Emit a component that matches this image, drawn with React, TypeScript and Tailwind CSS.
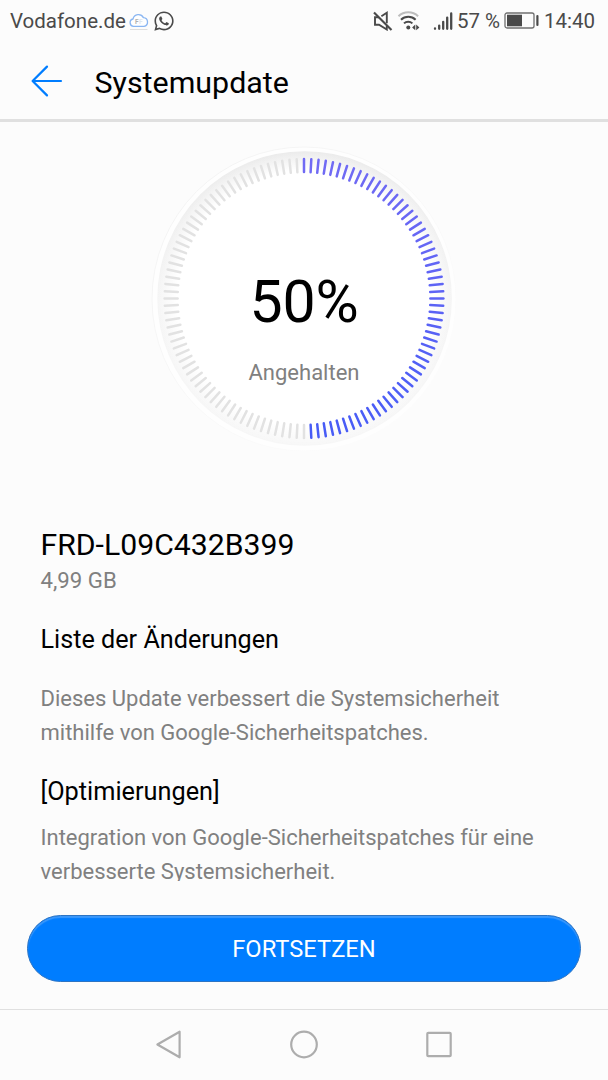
import { FaWhatsapp } from "react-icons/fa";

const TICKS = 120;
const PROGRESS = 50;

function lerp(a: number, b: number, t: number) {
  return Math.round(a + (b - a) * t);
}

function StatusBar() {
  return (
    <div className="flex h-[42px] shrink-0 items-center pl-[10px] pr-[13px] text-[20.5px] leading-6 text-[#4a4a4a]">
      <span>Vodafone.de</span>
      <svg className="ml-[3px]" width="20" height="20" viewBox="0 0 20 20" fill="none">
        <path d="M1 18.5h17.5" stroke="#dedede" strokeWidth="1" />
        <path
          d="M4.6 15.3a3.7 3.7 0 0 1-.6-7.3 5.6 5.6 0 0 1 10.4-1.4 4.4 4.4 0 0 1 .6 8.7z"
          fill="#fff"
          stroke="#8ab6f2"
          strokeWidth="1.3"
        />
        <text x="6" y="12.9" fontSize="6.5" fontWeight="700" fill="#b0b0b0">F</text>
        <text x="10" y="12.9" fontSize="6.5" fontWeight="700" fill="#dfe6ef">F</text>
      </svg>
      <FaWhatsapp className="ml-[4px] size-[22px] text-[#4a4a4a]" />

      <div className="ml-auto flex items-center">
        <svg width="20" height="20" viewBox="0 0 20 20" fill="none" stroke="#4a4a4a" strokeWidth="1.9">
          <path d="M1 1.6 18.5 19" strokeWidth="2.1" />
          <path d="M6 6.2H2v7.6h4l7.8 4.7V15M8.4 5.2l5.4-3.4v10.4" />
        </svg>
        <svg className="ml-1" width="24" height="20" viewBox="0 0 24 20" fill="none" strokeWidth="2">
          <path d="M1.5 5.2a14.2 14.2 0 0 1 19.6 0" stroke="#bdbdbd" />
          <path d="M4 8.8a10.3 10.3 0 0 1 14.6 0" stroke="#4a4a4a" />
          <path d="M7 12.4a6 6 0 0 1 8.4 0" stroke="#4a4a4a" />
          <circle cx="11.3" cy="16.4" r="2" fill="#4a4a4a" />
          <path d="m18.3 13.6-3.2 2.8 3.2 2.8zM19.2 13.6l3.2 2.8-3.2 2.8z" fill="#4a4a4a" />
        </svg>
        <svg className="ml-3" width="20" height="20" viewBox="0 0 20 20" stroke="#4a4a4a" strokeWidth="2.3" strokeLinecap="round">
          <path d="M2 17.4v.4M6.2 14.6v3.2M10.2 10.8v7M14.2 6.6v11.2M18.2 2.4v15.4" />
        </svg>
        <span className="ml-1 w-[43px] whitespace-nowrap">57 %</span>
        <svg className="ml-1" width="36" height="18" viewBox="0 0 36 18" fill="none">
          <rect x="1" y="1" width="29" height="15" rx="2" stroke="#6f6f6f" strokeWidth="1.3" />
          <rect x="3" y="2.7" width="15" height="11.6" fill="#4a4a4a" />
          <path d="M33.4 4v9" stroke="#4a4a4a" strokeWidth="2.2" strokeLinecap="round" />
        </svg>
        <span className="ml-1">14:40</span>
      </div>
    </div>
  );
}

function Dial() {
  const active = (TICKS * PROGRESS) / 100;
  return (
    <svg width="310" height="310" viewBox="-155 -155 310 310" fill="none" className="col-start-1 row-start-1">
      <defs>
        <linearGradient id="rim" x1="0" y1="0" x2="0" y2="1">
          <stop offset="0" stopColor="#ebebeb" />
          <stop offset="0.5" stopColor="#f5f5f5" />
          <stop offset="1" stopColor="#f7f7f7" />
        </linearGradient>
        <linearGradient id="edge" x1="0" y1="0" x2="1" y2="1">
          <stop offset="0" stopColor="#f2f2f2" />
          <stop offset="0.8" stopColor="#fcfcfc" />
        </linearGradient>
        <radialGradient id="face">
          <stop offset="0.87" stopColor="#fff" />
          <stop offset="1" stopColor="#fff" stopOpacity="0" />
        </radialGradient>
      </defs>
      <circle cx="0" cy="0" r="152" fill="#fefefe" stroke="url(#edge)" />
      <circle cx="0.6" cy="-0.5" r="147.3" fill="url(#rim)" />
      <circle cx="0.6" cy="-0.5" r="147.3" fill="url(#face)" />
      {Array.from({ length: TICKS }, (_, i) => {
        const angle = (i * 360) / TICKS;
        const t = (1 - Math.cos((angle * Math.PI) / 180)) / 2;
        const color = i < active ? `rgb(${lerp(112, 72, t)} ${lerp(106, 92, t)} ${lerp(244, 246, t)})` : "#e2e2e2";
        return (
          <path
            key={i}
            d="M0-139.4v13"
            stroke={color}
            strokeWidth="2.5"
            strokeLinecap="round"
            transform={`translate(0 -0.5) rotate(${angle})`}
          />
        );
      })}
    </svg>
  );
}

function NavBar() {
  return (
    <div className="flex h-[71px] shrink-0 items-center justify-center gap-[105px] border-t border-[#e0e0e0] text-[#adadad]">
      <svg width="30" height="30" viewBox="0 0 30 30" fill="none" stroke="currentColor" strokeWidth="2.2" strokeLinejoin="round">
        <path d="M25.6 1.7v25.6L3.4 14.5z" />
      </svg>
      <svg width="30" height="30" viewBox="0 0 30 30" fill="none" stroke="currentColor" strokeWidth="2.2">
        <circle cx="15" cy="14.5" r="12.8" />
      </svg>
      <svg width="30" height="30" viewBox="0 0 30 30" fill="none" stroke="currentColor" strokeWidth="2.2">
        <rect x="3.3" y="2.8" width="23.4" height="23.4" rx="1" />
      </svg>
    </div>
  );
}

export default function App() {
  return (
    <div className="flex h-[1080px] w-[608px] flex-col overflow-hidden bg-[#fcfcfc] font-['Roboto',sans-serif] text-black">
      <StatusBar />

      <header className="flex h-[80px] shrink-0 items-center border-b-[3px] border-[#e0e0e0] pl-[31px]">
        <svg width="32" height="32" viewBox="0 0 32 32" fill="none" stroke="#007dff" strokeWidth="2.2" strokeLinecap="round" strokeLinejoin="round">
          <path d="M30 16H1.8M16 1.6 1.6 16 16 30.4" />
        </svg>
        <h1 className="ml-[31.5px] pt-[4px] text-[30.4px] leading-9">Systemupdate</h1>
      </header>

      <section className="mt-[22px] grid shrink-0 place-items-center">
        <Dial />
        <div className="col-start-1 row-start-1 flex flex-col items-center pt-[55px]">
          <div className="text-[59px] leading-[70px] tracking-[-0.2px]">50%</div>
          <div className="mt-[22px] text-[22px] leading-7 text-[#808080]">Angehalten</div>
        </div>
      </section>

      <main className="mt-[73px] h-[354px] shrink-0 overflow-hidden px-[40.5px]">
        <h2 className="text-[30.2px] leading-9">FRD-L09C432B399</h2>
        <p className="mt-[3px] text-[22.2px] leading-[28px] text-[#808080]">4,99 GB</p>
        <h3 className="mt-[29px] text-[25.2px] leading-[34px]">Liste der Änderungen</h3>
        <p className="mt-[25px] text-[22px] leading-[34px] text-[#808080]">
          Dieses Update verbessert die Systemsicherheit
          <br />
          mithilfe von Google-Sicherheitspatches.
        </p>
        <h3 className="mt-[25px] text-[25.3px] leading-[34px]">[Optimierungen]</h3>
        <p className="mt-3 text-[22px] leading-[34px] text-[#808080]">
          Integration von Google-Sicherheitspatches für eine
          <br />
          verbesserte Systemsicherheit.
        </p>
      </main>

      <div className="mt-auto mb-[27px] shrink-0 px-[27px]">
        <button className="h-[67px] w-full rounded-full border border-[#2c74c4] bg-[#007dff] pt-[3px] text-[23.7px] text-white shadow-[inset_0_2px_1px_#3b98fb]">
          FORTSETZEN
        </button>
      </div>

      <NavBar />
    </div>
  );
}
